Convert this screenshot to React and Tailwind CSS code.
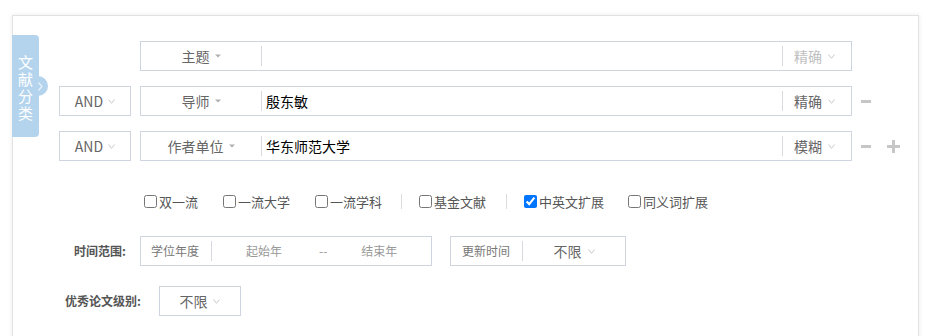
import React from 'react';

const font = { fontFamily: '"Noto Sans CJK SC", "Noto Sans", sans-serif' };

const Chevron = ({ color = '#c8c8c8' }) => (
  <svg width="7" height="5" viewBox="0 0 7 5" className="shrink-0">
    <polyline points="0.5,0.5 3.5,4.3 6.5,0.5" fill="none" stroke={color} strokeWidth="1" />
  </svg>
);

const Caret = () => (
  <svg width="6" height="4" viewBox="0 0 6 4" className="shrink-0">
    <polygon points="0,0.5 6,0.5 3,3.5" fill="#b0b0b0" />
  </svg>
);

const AndBox = () => (
  <div className="w-[72px] h-[30px] border border-[#cfd5de] flex items-center justify-center gap-[5px] text-[14px] text-[#666]">
    <span className="leading-none">AND</span>
    <Chevron />
  </div>
);

const SearchRow = ({ logic, field, value, match, matchColor = '#666', minus, plus }) => (
  <div className="flex items-center h-[30px]">
    {logic ? <AndBox /> : <div className="w-[72px]" />}
    <div className="ml-[9px] w-[712px] h-[30px] border border-[#cfd5de] flex items-center">
      <div className="w-[120px] flex items-center justify-center gap-[5px] text-[14px] text-[#666]">
        <span className="leading-none">{field}</span>
        <Caret />
      </div>
      <div className="w-px h-[20px] bg-[#d6d9de]" />
      <div className="flex-1 pl-[4px] text-[14px] text-black leading-none">{value}</div>
      <div className="w-px h-[20px] bg-[#d6d9de]" />
      <div className="w-[68px] pl-[11px] flex items-center gap-[6px] text-[14px]" style={{ color: matchColor }}>
        <span className="leading-none">{match}</span>
        <Chevron />
      </div>
    </div>
    {minus && <div className="ml-[9px] w-[10px] h-[3px] bg-[#c6c6c6]" />}
    {plus && (
      <div className="ml-[16px] relative w-[13px] h-[13px]">
        <div className="absolute left-0 top-[5px] w-[13px] h-[3px] bg-[#c6c6c6]" />
        <div className="absolute left-[5px] top-0 w-[3px] h-[13px] bg-[#c6c6c6]" />
      </div>
    )}
  </div>
);

const Check = ({ label, checked, className = '' }) => (
  <label className={`flex items-center gap-[2px] text-[13px] text-[#555] leading-none ${className}`}>
    <input type="checkbox" defaultChecked={checked} className="w-[13px] h-[13px] m-0 accent-[#0075ff]" />
    <span>{label}</span>
  </label>
);

export default function App() {
  return (
    <div className="min-h-screen bg-white pt-[15px] pl-[12px] overflow-hidden" style={font}>
      <div className="relative w-[907px] h-[330px] border border-b-0 border-[#e2e2e2] bg-white shadow-[0_0_5px_rgba(0,0,0,0.08)]">
        {/* side tab */}
        <div className="absolute left-[-1px] top-[19px] w-[27px] h-[102px] bg-[#b4d4ee] rounded-r-[4px] flex justify-center pt-[18px]">
          <div className="relative z-10 w-[15px] text-white text-[15px] leading-[17px] break-all">文献分类</div>
          <div className="absolute left-[16px] top-[41px] w-[20px] h-[20px] rounded-full bg-[#b4d4ee] flex items-center justify-end pr-[5px]">
            <svg width="5" height="9" viewBox="0 0 5 9">
              <polyline points="0.5,0.5 4,4.5 0.5,8.5" fill="none" stroke="#e8f2fb" strokeWidth="1.2" />
            </svg>
          </div>
        </div>

        <div className="pl-[46px] pt-[25px]">
          <div className="flex flex-col gap-[15px]">
            <SearchRow field="主题" value="" match="精确" matchColor="#c0c0c0" />
            <SearchRow logic field="导师" value="殷东敏" match="精确" minus />
            <SearchRow logic field="作者单位" value="华东师范大学" match="模糊" minus plus />
          </div>

          <div className="mt-[30px] h-[20px] flex items-center ml-[85px]">
            <Check label="双一流" />
            <Check label="一流大学" className="ml-[25px]" />
            <Check label="一流学科" className="ml-[25px]" />
            <div className="ml-[19px] w-px h-[15px] bg-[#dcdcdc]" />
            <Check label="基金文献" className="ml-[17px]" />
            <div className="ml-[20px] w-px h-[15px] bg-[#dcdcdc]" />
            <Check label="中英文扩展" checked className="ml-[17px]" />
            <Check label="同义词扩展" className="ml-[24px]" />
          </div>

          <div className="mt-[25px] h-[30px] flex items-center">
            <div className="w-[72px] pr-[5px] text-right text-[12px] font-bold text-[#555]">时间范围:</div>
            <div className="ml-[9px] w-[292px] h-[30px] border border-[#cfd5de] flex items-center text-[12px] leading-none">
              <span className="pl-[10px] w-[70px] text-[#777]">学位年度</span>
              <div className="w-px h-[20px] bg-[#d6d9de]" />
              <span className="ml-[34px] text-[#999]">起始年</span>
              <span className="ml-[37px] text-[#999]">--</span>
              <span className="ml-[34px] text-[#999]">结束年</span>
            </div>
            <div className="ml-[18px] w-[176px] h-[30px] border border-[#cfd5de] flex items-center text-[12px] leading-none">
              <span className="pl-[11px] w-[71px] text-[#777]">更新时间</span>
              <div className="w-px h-[20px] bg-[#d6d9de]" />
              <div className="flex-1 flex items-center justify-center gap-[6px] text-[14px] text-[#666]">
                <span>不限</span>
                <Chevron />
              </div>
            </div>
          </div>

          <div className="mt-[20px] h-[30px] flex items-center">
            <div className="ml-[6px] text-[12px] font-bold text-[#555]">优秀论文级别:</div>
            <div className="ml-[18px] w-[82px] h-[30px] border border-[#cfd5de] flex items-center justify-center gap-[6px] text-[14px] text-[#666] leading-none">
              <span>不限</span>
              <Chevron />
            </div>
          </div>
        </div>
      </div>
    </div>
  );
}
